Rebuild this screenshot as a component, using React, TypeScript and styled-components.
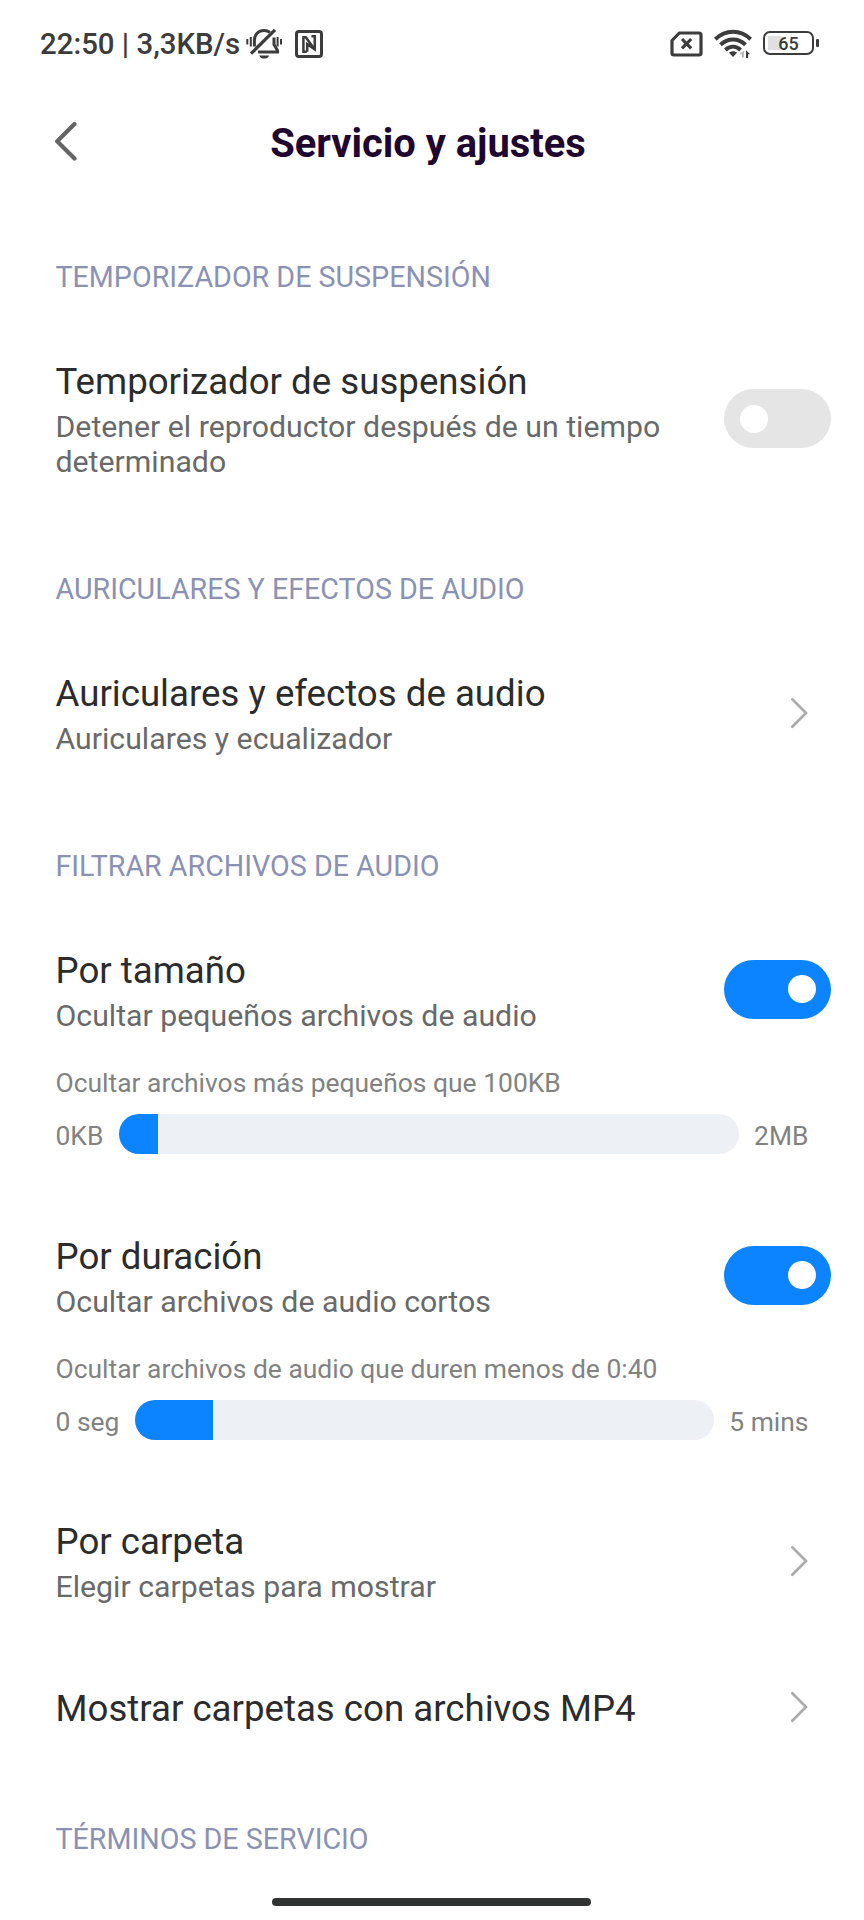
import React from 'react';
import styled, { createGlobalStyle } from 'styled-components';

const Global = createGlobalStyle`
  * { box-sizing: border-box; }
  body { margin: 0; background: #fff; font-family: Roboto, sans-serif; }
`;

const Screen = styled.main`
  width: 864px;
  height: 1920px;
  overflow: hidden;
  position: relative;
  background: #fff;
`;
const StatusBar = styled.header`
  height: 88px;
  padding: 0 45px 0 40px;
  display: flex;
  align-items: center;
  justify-content: space-between;
  color: #3c3c3c;
  svg { display: block; flex: none; }
`;
const StatusGroup = styled.div<{ $gap: number }>`
  display: flex;
  align-items: center;
  gap: ${p => p.$gap}px;
`;
const Clock = styled.span`
  width: 193px;
  font-size: 29.4px;
  line-height: 34px;
  font-weight: 500;
  white-space: nowrap;
`;
const Battery = styled.div`
  display: flex;
  align-items: center;
  gap: 2px;
  margin-top: -2px;
`;
const BatteryBody = styled.div`
  width: 51px;
  height: 24px;
  border: 2.5px solid #3c3c3c;
  border-radius: 7px;
  font-size: 18px;
  font-weight: 500;
  line-height: 21px;
  text-align: center;
  background: linear-gradient(#e0e0e0, #e0e0e0) 3px 3px / 14px 14px no-repeat;
`;
const BatteryTip = styled.div`
  width: 3px;
  height: 8px;
  border-radius: 1px;
  background: #3c3c3c;
`;
const TitleBar = styled.div`
  height: 110px;
  padding: 0 62px 0 54px;
  display: grid;
  grid-template-columns: 24px 1fr 24px;
  align-items: center;
`;
const BackIcon = styled.svg`
  display: block;
  margin-bottom: 4px;
`;
const Title = styled.h1`
  margin: 1px 0 0;
  text-align: center;
  font-size: 39.9px;
  font-weight: 700;
  line-height: 49px;
  color: #1f0630;
  white-space: nowrap;
`;
const SectionLabel = styled.h2<{ $top: number }>`
  margin: ${p => p.$top}px 0 0;
  padding: 0 55.5px;
  height: 36px;
  font-size: 28.65px;
  font-weight: 400;
  line-height: 36px;
  color: #8b91b3;
  white-space: nowrap;
`;
const Row = styled.section<{ $top: number; $toggle?: boolean }>`
  margin-top: ${p => p.$top}px;
  padding: 0 ${p => (p.$toggle ? 33 : 56)}px 0 55.5px;
  display: flex;
  align-items: center;
  justify-content: space-between;
`;
const Name = styled.div`
  font-size: 36.65px;
  line-height: 48px;
  color: #2c2c2c;
  white-space: nowrap;
`;
const Description = styled.div`
  font-size: 30.25px;
  line-height: 35px;
  margin-top: 3px;
  color: #696969;
  white-space: pre;
`;
const Toggle = styled.div<{ $on?: boolean }>`
  width: 107px;
  height: 59px;
  margin-bottom: ${p => (p.$on ? 2 : 0)}px;
  padding: 0 15px 0 16px;
  border-radius: 30px;
  display: flex;
  align-items: center;
  justify-content: ${p => (p.$on ? 'flex-end' : 'flex-start')};
  background: ${p => (p.$on ? '#0d84ff' : '#e5e5e5')};
`;
const Knob = styled.div`
  width: 28px;
  height: 28px;
  border-radius: 50%;
  background: #fff;
`;
const Hint = styled.div`
  margin-top: 32px;
  padding: 0 55.5px;
  font-size: 26.45px;
  line-height: 35px;
  color: #828282;
`;
const SliderRow = styled.div`
  margin-top: 14px;
  padding: 0 55.5px;
  height: 40px;
  display: flex;
  align-items: center;
  gap: 15.5px;
  white-space: nowrap;
`;
const Bound = styled.span`
  padding-top: 2px;
  font-size: 26.45px;
  color: #828282;
`;
const Track = styled.div`
  flex: 1;
  height: 40px;
  border-radius: 20px;
  background: #edf0f5;
  overflow: hidden;
`;
const Fill = styled.div<{ $width: number }>`
  width: ${p => p.$width}px;
  height: 100%;
  background: #0d84ff;
`;
const ChevronIcon = styled.svg<{ $lift?: boolean }>`
  display: block;
  flex: none;
  margin-bottom: ${p => (p.$lift ? 4 : 0)}px;
`;
const HomeIndicator = styled.div`
  position: absolute;
  left: 272px;
  bottom: 14px;
  width: 319px;
  height: 8px;
  border-radius: 4px;
  background: #303332;
`;

const Chevron = ({ lift }: { lift?: boolean }) => (
  <ChevronIcon $lift={lift} width="18" height="32" viewBox="0 0 18 32" fill="none" stroke="#ababab" strokeWidth="2.7" strokeLinecap="round">
    <path d="M2.3 2.3 16 16 2.3 29.7" />
  </ChevronIcon>
);

const MutedBell = () => (
  <svg width="36" height="32" viewBox="0 0 36 32" fill="none" stroke="#3c3c3c" strokeWidth="3">
    <path d="M8.4 18.5V12.5C8.4 6.5 12.3 2.6 18.2 2.6c2.2 0 4.2.6 5.8 1.8M28 9.5V16.5L31.6 22.6v1.3H12" />
    <path d="M5 25.6 29 1.8" strokeWidth="3.2" />
    <path d="M1.3 11v5.5M4.8 9v9.5M31.6 9v9.5M35 11v5.5" strokeWidth="2" />
    <path d="M13.2 27.4h10c-1 2.1-2.7 3.2-5 3.2s-4-1.1-5-3.2z" fill="#3c3c3c" stroke="none" />
  </svg>
);

const Nfc = () => (
  <svg width="28" height="28" viewBox="0 0 28 28" fill="none" stroke="#3c3c3c">
    <rect x="1.5" y="1.5" width="25" height="25" rx="2.5" strokeWidth="3" />
    <path d="M11.8 21.8H8.4V7.2h2.4l8.4 11.6M16.4 6.2h3.4v13.2l-7.6-5.2v7.6" strokeWidth="2.5" />
  </svg>
);

const NoSim = () => (
  <svg width="33" height="26" viewBox="0 0 33 26" fill="none" stroke="#3c3c3c" strokeWidth="3.2">
    <path d="M9.3 2H29a2 2 0 0 1 2 2v18a2 2 0 0 1-2 2H4a2 2 0 0 1-2-2V9.5z" strokeLinejoin="round" />
    <path d="M12 8l9.2 9.4M21.2 8 12 17.4" />
  </svg>
);

const Wifi = () => (
  <svg width="38" height="30" viewBox="0 0 38 30" fill="none" stroke="#3c3c3c" strokeWidth="4">
    <path d="M1.3 10.2C11.5.2 26.5.2 36.7 10.2M6.5 15.8C13.8 8.8 24.2 8.8 31.5 15.8M11.4 21c4.6-4.2 10.6-4.2 15.2 0" />
    <path d="M15 23.8c2.2-2 5.8-2 8 0L19 28z" fill="#3c3c3c" stroke="none" />
    <path d="M29.8 21.5v7h-1.9v-3.3h-2.4z" fill="#b5b5b5" stroke="none" />
    <path d="M32 29v-7.8l4.2 4h-2.1V29z" fill="#3c3c3c" stroke="none" />
  </svg>
);

export default function App() {
  return (
    <Screen>
      <Global />
      <StatusBar>
        <StatusGroup $gap={13}>
          <Clock>22:50 | 3,3KB/s</Clock>
          <MutedBell />
          <Nfc />
        </StatusGroup>
        <StatusGroup $gap={11}>
          <NoSim />
          <Wifi />
          <Battery>
            <BatteryBody>65</BatteryBody>
            <BatteryTip />
          </Battery>
        </StatusGroup>
      </StatusBar>
      <TitleBar>
        <BackIcon width="24" height="40" viewBox="0 0 24 40" fill="none" stroke="#646464" strokeWidth="4.2" strokeLinecap="round" strokeLinejoin="round">
          <path d="M20.5 3 3.2 20.2 20.5 37.4" />
        </BackIcon>
        <Title>Servicio y ajustes</Title>
      </TitleBar>

      <SectionLabel $top={61}>TEMPORIZADOR DE SUSPENSIÓN</SectionLabel>
      <Row $top={63} $toggle>
        <div>
          <Name>Temporizador de suspensión</Name>
          <Description>{'Detener el reproductor después de un tiempo\ndeterminado'}</Description>
        </div>
        <Toggle><Knob /></Toggle>
      </Row>

      <SectionLabel $top={92}>AURICULARES Y EFECTOS DE AUDIO</SectionLabel>
      <Row $top={63}>
        <div>
          <Name>Auriculares y efectos de audio</Name>
          <Description>Auriculares y ecualizador</Description>
        </div>
        <Chevron />
      </Row>

      <SectionLabel $top={92}>FILTRAR ARCHIVOS DE AUDIO</SectionLabel>
      <Row $top={63} $toggle>
        <div>
          <Name>Por tamaño</Name>
          <Description>Ocultar pequeños archivos de audio</Description>
        </div>
        <Toggle $on><Knob /></Toggle>
      </Row>
      <Hint>Ocultar archivos más pequeños que 100KB</Hint>
      <SliderRow>
        <Bound>0KB</Bound>
        <Track><Fill $width={39} /></Track>
        <Bound>2MB</Bound>
      </SliderRow>

      <Row $top={79} $toggle>
        <div>
          <Name>Por duración</Name>
          <Description>Ocultar archivos de audio cortos</Description>
        </div>
        <Toggle $on><Knob /></Toggle>
      </Row>
      <Hint>Ocultar archivos de audio que duren menos de 0:40</Hint>
      <SliderRow>
        <Bound>0 seg</Bound>
        <Track><Fill $width={78} /></Track>
        <Bound>5 mins</Bound>
      </SliderRow>

      <Row $top={78}>
        <div>
          <Name>Por carpeta</Name>
          <Description>Elegir carpetas para mostrar</Description>
        </div>
        <Chevron />
      </Row>
      <Row $top={81}>
        <Name>Mostrar carpetas con archivos MP4</Name>
        <Chevron lift />
      </Row>

      <SectionLabel $top={88}>TÉRMINOS DE SERVICIO</SectionLabel>
      <HomeIndicator />
    </Screen>
  );
}
